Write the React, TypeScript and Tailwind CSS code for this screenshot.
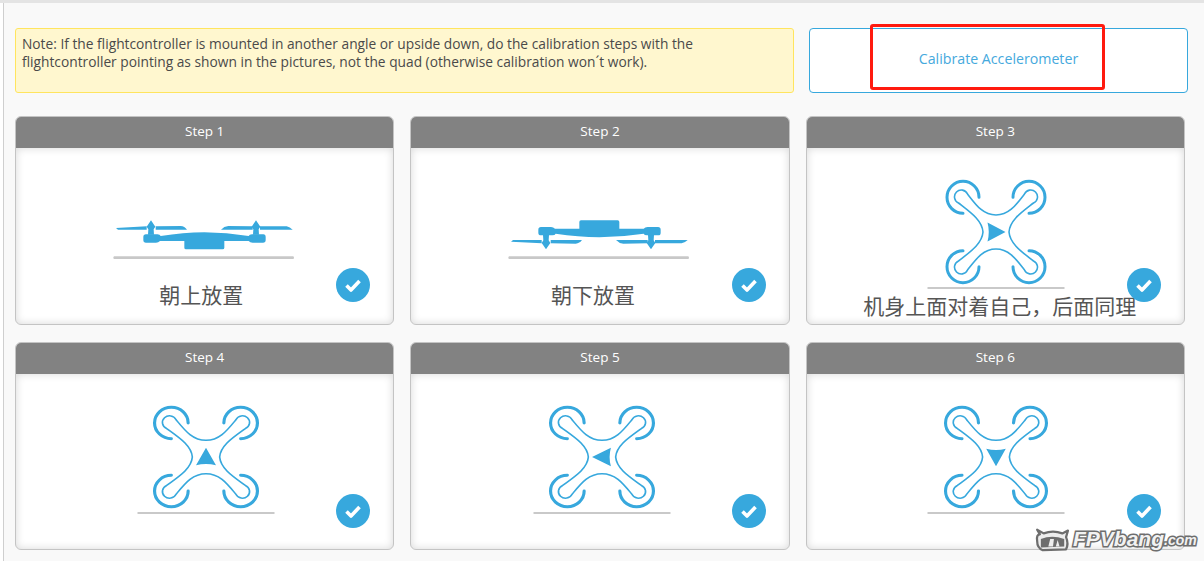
const BLUE = "#37a8dd";

function TopDrone({ rotate, scaleX = 1, scaleY = 1 }: { rotate: number; scaleX?: number; scaleY?: number }) {
  return (
    <svg width="140" height="110" viewBox="-70 -52 140 110" fill="none" className="overflow-visible">
      <g transform={`scale(${scaleX} ${scaleY})`}>
        <g stroke={BLUE} strokeWidth="3" strokeLinecap="round">
          <path d="M17 -34.7 A16 16 0 1 1 33 -18.7" />
          <path d="M-17 -34.7 A16 16 0 1 0 -33 -18.7" />
          <path d="M17 34.7 A16 16 0 1 0 33 18.7" />
          <path d="M-17 34.7 A16 16 0 1 1 -33 18.7" />
        </g>
        <path
          d="M0 -17 C13 -17 20 -27 28.5 -38 A6.8 6.8 0 1 1 37.5 -29 C26 -20 14 -12 13 0 C14 12 26 20 37.5 29 A6.8 6.8 0 1 1 28.5 38 C20 27 13 17 0 17 C-13 17 -20 27 -28.5 38 A6.8 6.8 0 1 1 -37.5 29 C-26 20 -14 12 -13 0 C-14 -12 -26 -20 -37.5 -29 A6.8 6.8 0 1 1 -28.5 -38 C-20 -27 -13 -17 0 -17 Z"
          stroke={BLUE}
          strokeWidth="1.6"
        />
        <path d="M-8.5 -9.5 L9.5 0 L-8.5 9.5 Q-6 0 -8.5 -9.5 Z" fill={BLUE} transform={`rotate(${rotate})`} />
      </g>
      <rect x="-68.5" y="55" width="137" height="2" fill="#c9c9c9" />
    </svg>
  );
}

function SideDrone({ flipped }: { flipped?: boolean }) {
  return (
    <svg width="190" height="45" viewBox="60 50 570 135" fill="none">
      <g fill={BLUE} transform={flipped ? "matrix(1 0 0 -1 0 213)" : undefined}>
        <path d="M78 86 L170 81 L170 91 L84 91 Z" />
        <path d="M197 81 L272 80 Q284 81 291 91 L197 91 Z" />
        <path d="M393 91 Q402 81 415 80 L488 81 L488 91 Z" />
        <path d="M510 81 L590 81 Q600 83 608 91 L510 91 Z" />
        <path d="M183 63 L196 82 L191 90 L192 106 L174 106 L175 90 L170 82 Z" />
        <path d="M498 63 L511 82 L506 90 L507 106 L489 106 L490 90 L485 82 Z" />
        <path d="M160 113 Q160 105 168 105 L202 105 Q210 105 212 110 Q280 100 343 99 Q410 100 476 110 Q478 105 486 105 L520 105 Q527 105 527 113 L527 122 Q527 130 519 130 L488 130 Q480 130 476 125 L403 125 L403 145 Q403 150 398 150 L288 150 Q283 150 283 145 L283 125 L210 125 Q205 130 198 130 L168 130 Q160 130 160 122 Z" />
      </g>
      <path d="M72 171 L610 171 Q614 175 610 179 L72 179 Q68 175 72 171 Z" fill="#c8c8c8" />
    </svg>
  );
}

function CheckBadge({ short }: { short?: boolean }) {
  return (
    <div className={`absolute right-[23px] w-[34px] h-[34px] rounded-full bg-[#37a8dd] flex items-center justify-center ${short ? "bottom-[21px]" : "bottom-[22px]"}`}>
      <svg width="20" height="20" viewBox="0 0 20 20" fill="none">
        <path d="M3.5 10.5 L8 15 L16.5 6" stroke="white" strokeWidth="3.6" strokeLinejoin="round" />
      </svg>
    </div>
  );
}

function StepCard({ title, short, children }: { title: string; short?: boolean; children?: React.ReactNode }) {
  return (
    <div className={`relative rounded-[6px] border border-[#c4c4c4] overflow-hidden bg-white flex flex-col ${short ? "h-[208px]" : "h-[209px]"}`}>
      <div className="h-[31px] pb-[2px] bg-[#828282] text-white text-[13.5px] font-medium flex items-center justify-center">
        {title}
      </div>
      <div className="flex-1 flex flex-col items-center shadow-[inset_0_0_8px_rgba(0,0,0,0.16)]">{children}</div>
      <CheckBadge short={short} />
    </div>
  );
}

const labelClass = "text-[21px] leading-[28px] text-[#555] whitespace-nowrap";
const cjk = { fontFamily: '"Noto Sans CJK SC", sans-serif' };

function Watermark() {
  return (
    <div className="absolute left-[1034px] top-[523px] flex items-center">
      <svg width="38" height="28" viewBox="0 0 38 30" fill="none">
        <path d="M2 5 L9 9 Q19 5 29 9 L35 6 L33 13 Q36 20 33 26 L8 27 Q2 25 2 17 Q1 10 5 10 Z" fill="#eeeeee" stroke="#6e6e6e" strokeWidth="2.4" strokeLinejoin="round" />
        <path d="M6 15 Q18 10 31 15 L31 23 L6 24 Z" fill="#6e6e6e" />
        <path d="M16 15 L20 15 L19 23 L14 23 Z M24 16 L26 23 L22 23 Z" fill="#eeeeee" />
      </svg>
      <span className="ml-[1px] text-[21px] font-bold italic text-[#f2f2f2] [-webkit-text-stroke:3px_#6e6e6e] [paint-order:stroke_fill] font-['Liberation_Sans',sans-serif]">
        FPVbang
      </span>
      <span className="mt-[4px] text-[14px] font-bold italic text-[#f2f2f2] [-webkit-text-stroke:3px_#6e6e6e] [paint-order:stroke_fill] font-['Liberation_Sans',sans-serif]">
        .com
      </span>
    </div>
  );
}

export default function App() {
  return (
    <div className="relative h-[561px] w-[1204px] overflow-hidden bg-white font-['Open_Sans',sans-serif]">
      <div className="h-[3px] bg-[#e4e4e4]" />
      <div className="ml-[3px] h-[558px] border-l border-[#cfcfcf] bg-[#f9f9f9] pl-[11px] pt-[25px]">
        <div className="flex w-[1173px] gap-[15px]">
          <div className="h-[65px] w-[779px] rounded-[3px] border border-[#ffe55f] bg-[#fff7cf] px-[6px] py-[6px] text-[13.75px] leading-[18px] text-[#4a4a4a] whitespace-nowrap">
            Note: If the flightcontroller is mounted in another angle or upside down, do the calibration steps with the
            <br />
            flightcontroller pointing as shown in the pictures, not the quad (otherwise calibration won´t work).
          </div>
          <div className="flex h-[65px] w-[379px] items-center justify-center rounded-[4px] border border-[#37a8dd] bg-white pb-[4px] text-[14.2px] font-medium text-[#45a9dd]">
            Calibrate Accelerometer
          </div>
        </div>

        <div className="mt-[23px] grid w-[1170px] grid-cols-3 gap-x-[16px] gap-y-[17px]">
          <StepCard title="Step 1">
            <div className="mt-[68px]">
              <SideDrone />
            </div>
            <div className={`${labelClass} mt-[19px] -ml-[7px]`} style={cjk}>朝上放置</div>
          </StepCard>
          <StepCard title="Step 2">
            <div className="mt-[68px]">
              <SideDrone flipped />
            </div>
            <div className={`${labelClass} mt-[19px] -ml-[14px]`} style={cjk}>朝下放置</div>
          </StepCard>
          <StepCard title="Step 3">
            <div className="mt-[32px] ml-[2px]">
              <TopDrone rotate={0} />
            </div>
            <div className={`${labelClass} mt-[1px] ml-[9px]`} style={cjk}>机身上面对着自己，后面同理</div>
          </StepCard>
          <StepCard title="Step 4" short>
            <div className="mt-[31px] ml-[2px]">
              <TopDrone rotate={-90} scaleX={1.05} scaleY={0.98} />
            </div>
          </StepCard>
          <StepCard title="Step 5" short>
            <div className="mt-[31px] ml-[5px]">
              <TopDrone rotate={180} scaleX={1.05} scaleY={0.98} />
            </div>
          </StepCard>
          <StepCard title="Step 6" short>
            <div className="mt-[31px] ml-[2px]">
              <TopDrone rotate={90} scaleX={1.03} scaleY={0.98} />
            </div>
          </StepCard>
        </div>
      </div>

      <div className="absolute left-[870px] top-[24px] h-[66px] w-[235px] rounded-[3px] border-[3px] border-[#ff1a0f]" />
      <Watermark />
    </div>
  );
}
